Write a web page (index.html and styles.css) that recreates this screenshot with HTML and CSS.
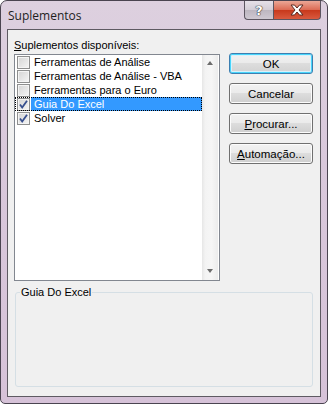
FILE: index.html
```html
<!DOCTYPE html>
<html lang="pt">
<head>
    <meta charset="UTF-8">
    <meta name="viewport" content="width=device-width, initial-scale=1.0">
    <title>Suplementos</title>
    <link rel="stylesheet" href="styles.css">
</head>
<body>
<div class="window">
    <div class="titlebar">
        <span class="title">Suplementos</span>
        <div class="caption">
            <div class="cap help">?</div>
            <div class="cap close">
                <svg width="16" height="12" viewBox="0 0 16 12">
                    <path d="M2 1 L5.5 1 L8 4 L10.5 1 L14 1 L10 6 L14 11 L10.5 11 L8 8 L5.5 11 L2 11 L6 6 Z" fill="#fff" stroke="#5a2a22" stroke-width="1"/>
                </svg>
            </div>
        </div>
    </div>
    <div class="client">
        <div class="top">
            <div class="left">
                <div class="list-label"><u>S</u>uplementos disponíveis:</div>
                <div class="listbox">
                    <ul class="items">
                        <li class="item"><span class="check"></span><span class="text">Ferramentas de Análise</span></li>
                        <li class="item"><span class="check"></span><span class="text">Ferramentas de Análise - VBA</span></li>
                        <li class="item"><span class="check"></span><span class="text">Ferramentas para o Euro</span></li>
                        <li class="item selected"><span class="check checked"></span><span class="text">Guia Do Excel</span></li>
                        <li class="item"><span class="check checked"></span><span class="text">Solver</span></li>
                    </ul>
                    <div class="scrollbar">
                        <span class="arrow up"></span>
                        <span class="arrow down"></span>
                    </div>
                </div>
            </div>
            <div class="buttons">
                <button class="btn default">OK</button>
                <button class="btn">Cancelar</button>
                <button class="btn"><u>P</u>rocurar...</button>
                <button class="btn"><u>A</u>utomação...</button>
            </div>
        </div>
        <fieldset class="group">
            <legend>Guia Do Excel</legend>
        </fieldset>
    </div>
</div>
</body>
</html>
```

FILE: styles.css
```css
html, body {
    margin: 0;
    padding: 0;
    width: 328px;
    height: 404px;
    overflow: hidden;
    background: #fff;
}
.window {
    box-sizing: border-box;
    width: 328px;
    height: 404px;
    border: 1px solid #4a4450;
    border-radius: 7px 7px 5px 5px;
    background: linear-gradient(180deg, #ddd0df 0%, #d9c8db 40%, #d6c2d8 100%);
    display: flex;
    flex-direction: column;
    font-family: "Liberation Sans", Arial, sans-serif;
    font-size: 11px;
    color: #000;
}
.titlebar {
    height: 28px;
    display: flex;
    justify-content: space-between;
    align-items: flex-start;
    padding-left: 7px;
}
.title {
    font-family: "Open Sans", "Liberation Sans", sans-serif;
    font-size: 12px;
    line-height: 14px;
    margin-top: 8px;
    color: #1e1e1e;
}
.caption {
    display: flex;
    margin-right: 6px;
}
.cap {
    height: 18px;
    border: 1px solid #5c5560;
    border-top: none;
    display: flex;
    align-items: center;
    justify-content: center;
}
.help {
    width: 28px;
    border-radius: 0 0 0 4px;
    border-right: none;
    background: linear-gradient(180deg, #e6e0e8 0%, #d3cdd6 50%, #bdb6c0 51%, #cfc8d2 100%);
    color: #fff;
    font-family: "DejaVu Sans", sans-serif;
    font-weight: bold;
    font-size: 13px;
    text-shadow: 0 0 1px #333, 0 0 1px #333, 0 0 1px #333;
}
.close {
    width: 46px;
    border-radius: 0 0 4px 0;
    background: linear-gradient(180deg, #eba796 0%, #dc6c55 48%, #c8391c 52%, #d95a3f 100%);
}
.client {
    flex: 1;
    margin: 0 6px 6px 6px;
    border: 1px solid #5e5a62;
    background: #f0f0f0;
    display: flex;
    flex-direction: column;
}
.top {
    display: flex;
}
.left {
    padding-left: 6px;
}
.list-label {
    margin-top: 8px;
    line-height: 14px;
    height: 14px;
}
.listbox {
    box-sizing: border-box;
    margin-top: 2px;
    width: 206px;
    height: 227px;
    border: 1px solid #828790;
    background: #fff;
    display: flex;
}
.items {
    list-style: none;
    margin: 0;
    padding: 0;
    flex: 1;
}
.item {
    height: 14px;
    display: flex;
    align-items: center;
    padding-left: 2px;
    position: relative;
}
.item .text {
    margin-left: 1px;
    padding: 0 1px 0 3px;
    line-height: 14px;
    flex: 1;
    white-space: nowrap;
}
.item.selected .text {
    background: #3399ff;
    color: #fff;
}
.item.selected::after {
    content: "";
    position: absolute;
    left: 0;
    top: 0;
    right: 0;
    bottom: 0;
    border: 1px dotted #000;
}
.check {
    box-sizing: border-box;
    width: 13px;
    height: 13px;
    border: 1px solid #8e8f8f;
    background: linear-gradient(135deg, #d4d4d4 0%, #e8e8e8 60%, #f6f6f6 100%);
    box-shadow: inset 0 0 0 1px #f4f4f4;
    flex: none;
}
.check.checked {
    background:
        url("data:image/svg+xml;utf8,<svg xmlns='http://www.w3.org/2000/svg' width='11' height='11' viewBox='0 0 11 11'><path d='M2 5.5 L4.2 8.5 L9 1.8' fill='none' stroke='%23374f8e' stroke-width='1.8'/></svg>") center/11px 11px no-repeat,
        linear-gradient(135deg, #d4d4d4 0%, #e8e8e8 60%, #f6f6f6 100%);
}
.scrollbar {
    width: 16px;
    flex: none;
    margin-right: 1px;
    background: linear-gradient(90deg, #e6e6e6 0%, #f3f3f3 20%, #f6f6f6 60%, #ececec 100%);
    display: flex;
    flex-direction: column;
    justify-content: space-between;
    align-items: center;
    padding: 6px 0 7px;
    box-sizing: border-box;
}
.arrow {
    width: 0;
    height: 0;
    border-left: 3.5px solid transparent;
    border-right: 3.5px solid transparent;
}
.arrow.up {
    border-bottom: 4px solid #6c6c6c;
}
.arrow.down {
    border-top: 4px solid #6c6c6c;
}
.buttons {
    margin-left: 9px;
    margin-top: 23px;
    display: flex;
    flex-direction: column;
    gap: 9px;
}
.btn {
    box-sizing: border-box;
    width: 84px;
    height: 21px;
    border: 1px solid #707070;
    border-radius: 3px;
    background: linear-gradient(180deg, #f2f2f2 0%, #ebebeb 45%, #dddddd 50%, #cfcfcf 100%);
    box-shadow: inset 0 0 0 1px #fcfcfc;
    font-family: "Liberation Sans", Arial, sans-serif;
    font-size: 11.5px;
    color: #000;
    padding: 0;
}
.btn.default {
    border-color: #3c7fb1;
    box-shadow: inset 0 0 0 1px #48d5fb, inset 0 0 0 2px #d7f1fb;
    background: linear-gradient(180deg, #f2f2f2 0%, #ebebeb 45%, #dddddd 50%, #d2d2d2 100%);
}
.group {
    margin: 4px 7px 9px 7px;
    padding: 0 4px;
    border: 1px solid #d5dfe5;
    border-radius: 3px;
    flex: 1;
}
.group legend {
    padding: 0 1px;
    line-height: 14px;
    font-size: 11px;
}
```
